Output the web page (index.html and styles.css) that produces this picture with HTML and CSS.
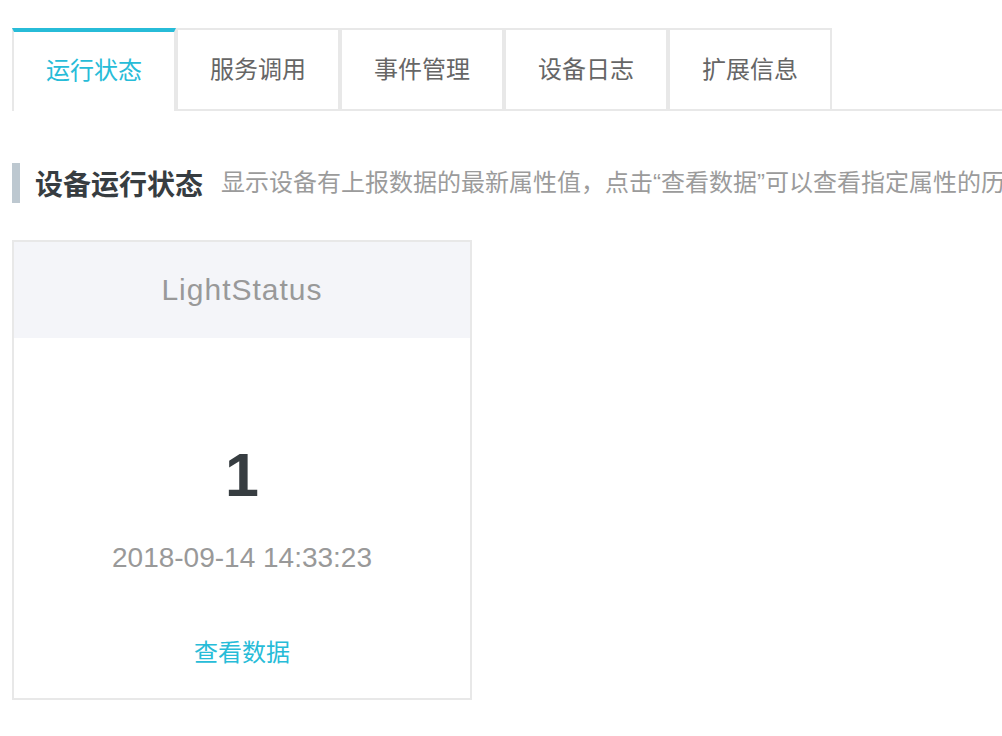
FILE: index.html
```html
<!DOCTYPE html>
<html lang="zh-CN">
<head>
<meta charset="utf-8">
<title>设备运行状态</title>
<link rel="stylesheet" href="styles.css">
</head>
<body>
<div class="page">
  <div class="tabs">
    <div class="tab active">运行状态</div>
    <div class="tab">服务调用</div>
    <div class="tab">事件管理</div>
    <div class="tab">设备日志</div>
    <div class="tab">扩展信息</div>
  </div>

  <div class="section-head">
    <span class="bar"></span>
    <h2 class="title">设备运行状态</h2>
    <span class="desc">显示设备有上报数据的最新属性值，点击“查看数据”可以查看指定属性的历史数据</span>
  </div>

  <div class="cards">
    <div class="card">
      <div class="card-head">LightStatus</div>
      <div class="card-body">
        <div class="value">1</div>
        <div class="time">2018-09-14 14:33:23</div>
        <a class="link" href="#">查看数据</a>
      </div>
    </div>
  </div>
</div>
</body>
</html>
```

FILE: styles.css
```css
html, body {
  margin: 0;
  padding: 0;
  background: #fff;
}

body {
  width: 1002px;
  height: 736px;
  overflow: hidden;
  font-family: "Noto Sans CJK SC", "Liberation Sans", sans-serif;
}

.page {
  padding-top: 28px;
}

.tabs {
  display: flex;
  margin-left: 12px;
  border-bottom: 2px solid #e8e8e8;
}

.tab {
  box-sizing: border-box;
  width: 164px;
  height: 81px;
  padding-bottom: 4px;
  border: 2px solid #e8e8e8;
  border-bottom: none;
  display: flex;
  align-items: center;
  justify-content: center;
  font-size: 24px;
  color: #666;
  background: #fff;
}

.tab.active {
  border-top: 4px solid #27bcd8;
  color: #27bcd8;
  height: 83px;
  margin-bottom: -2px;
  padding-bottom: 7px;
}

.section-head {
  display: flex;
  align-items: center;
  margin: 52px 0 0 12px;
  height: 40px;
  white-space: nowrap;
  overflow: hidden;
}

.bar {
  flex: none;
  width: 8px;
  height: 40px;
  background: #bdc8d0;
}

.title {
  flex: none;
  margin: 0 0 0 15px;
  font-size: 28px;
  font-weight: bold;
  color: #373d41;
  line-height: 40px;
}

.desc {
  margin-left: 18px;
  font-family: "Liberation Sans", "Noto Sans CJK SC", sans-serif;
  font-size: 24px;
  color: #9b9b9b;
  line-height: 40px;
}

.cards {
  display: flex;
  margin: 37px 0 0 12px;
}

.card {
  box-sizing: border-box;
  width: 460px;
  height: 460px;
  border: 2px solid #e8e8e8;
  display: flex;
  flex-direction: column;
}

.card-head {
  height: 96px;
  background: #f4f5f9;
  display: flex;
  align-items: center;
  justify-content: center;
  font-family: "Liberation Sans", "Noto Sans CJK SC", sans-serif;
  font-size: 30px;
  letter-spacing: 1px;
  color: #999;
}

.card-body {
  flex: 1;
  display: flex;
  flex-direction: column;
  align-items: center;
}

.value {
  margin-top: 107px;
  font-family: "Liberation Sans", sans-serif;
  font-weight: bold;
  font-size: 61px;
  line-height: 60px;
  color: #373d41;
}

.time {
  margin-top: 39px;
  font-family: "Liberation Sans", sans-serif;
  font-size: 28px;
  line-height: 28px;
  color: #999;
}

.link {
  margin-top: 67px;
  font-size: 24px;
  line-height: 24px;
  color: #27bcd8;
  text-decoration: none;
}
```
